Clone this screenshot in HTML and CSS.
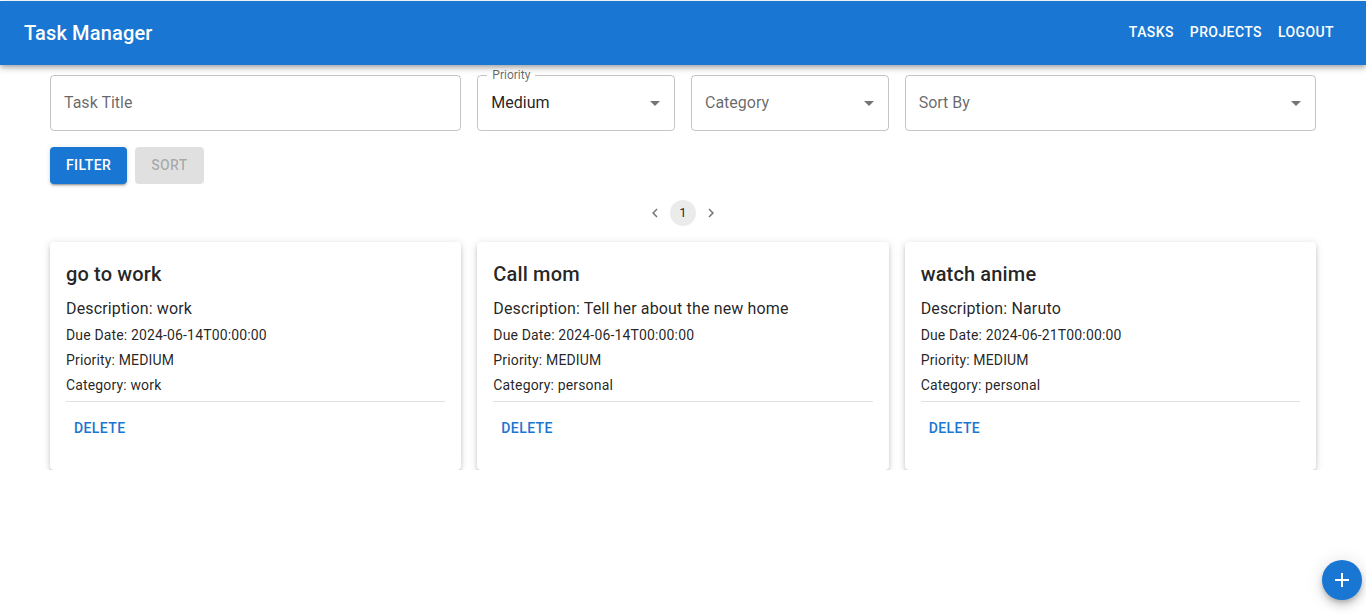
FILE: index.html
```html
<!DOCTYPE html>
<html lang="en">
<head>
<meta charset="utf-8">
<title>Task Manager</title>
<link rel="stylesheet" href="styles.css">
</head>
<body>
<header class="appbar">
  <div class="brand">Task Manager</div>
  <nav class="nav">
    <a class="nav-btn">Tasks</a>
    <a class="nav-btn">Projects</a>
    <a class="nav-btn">Logout</a>
  </nav>
</header>
<main class="main">
  <div class="filters">
    <div class="field wide"><span class="placeholder">Task Title</span></div>
    <div class="field narrow has-label">
      <span class="float-label">Priority</span>
      <span class="value">Medium</span>
      <svg class="arrow" viewBox="0 0 24 24" width="24" height="24"><path d="M7 10l5 5 5-5z"/></svg>
    </div>
    <div class="field narrow">
      <span class="placeholder">Category</span>
      <svg class="arrow" viewBox="0 0 24 24" width="24" height="24"><path d="M7 10l5 5 5-5z"/></svg>
    </div>
    <div class="field wide">
      <span class="placeholder">Sort By</span>
      <svg class="arrow" viewBox="0 0 24 24" width="24" height="24"><path d="M7 10l5 5 5-5z"/></svg>
    </div>
  </div>
  <div class="actions">
    <button class="btn btn-primary">Filter</button>
    <button class="btn btn-disabled">Sort</button>
  </div>
  <div class="pagination">
    <span class="page-item arrow-item"><svg viewBox="0 0 24 24" width="18" height="18"><path d="M15.41 7.41 14 6l-6 6 6 6 1.41-1.41L10.83 12z"/></svg></span>
    <span class="page-item current">1</span>
    <span class="page-item arrow-item"><svg viewBox="0 0 24 24" width="18" height="18"><path d="M10 6 8.59 7.41 13.17 12l-4.58 4.59L10 18l6-6z"/></svg></span>
  </div>
  <div class="cards">
    <div class="card">
      <h2 class="card-title">go to work</h2>
      <p class="card-desc">Description: work</p>
      <p class="card-line">Due Date: 2024-06-14T00:00:00</p>
      <p class="card-line">Priority: MEDIUM</p>
      <p class="card-line">Category: work</p>
      <hr class="divider">
      <div class="card-actions"><button class="text-btn">Delete</button></div>
    </div>
    <div class="card">
      <h2 class="card-title">Call mom</h2>
      <p class="card-desc">Description: Tell her about the new home</p>
      <p class="card-line">Due Date: 2024-06-14T00:00:00</p>
      <p class="card-line">Priority: MEDIUM</p>
      <p class="card-line">Category: personal</p>
      <hr class="divider">
      <div class="card-actions"><button class="text-btn">Delete</button></div>
    </div>
    <div class="card">
      <h2 class="card-title">watch anime</h2>
      <p class="card-desc">Description: Naruto</p>
      <p class="card-line">Due Date: 2024-06-21T00:00:00</p>
      <p class="card-line">Priority: MEDIUM</p>
      <p class="card-line">Category: personal</p>
      <hr class="divider">
      <div class="card-actions"><button class="text-btn">Delete</button></div>
    </div>
  </div>
</main>
<button class="fab" aria-label="add">
  <svg viewBox="0 0 24 24" width="24" height="24"><path d="M19 13h-6v6h-2v-6H5v-2h6V5h2v6h6v2z"/></svg>
</button>
</body>
</html>
```
FILE: styles.css
```css
* { box-sizing: border-box; }
html, body { margin: 0; padding: 0; }
body {
  font-family: Roboto, "Liberation Sans", Arial, sans-serif;
  color: rgba(0,0,0,0.87);
  background: #fff;
  padding-top: 1px;
}
.appbar {
  height: 64px;
  background: #1976d2;
  color: #fff;
  display: flex;
  align-items: center;
  justify-content: space-between;
  padding: 0 24px;
  box-shadow: 0 2px 4px -1px rgba(0,0,0,0.2), 0 4px 5px 0 rgba(0,0,0,0.14), 0 1px 10px 0 rgba(0,0,0,0.12);
  position: relative;
  z-index: 2;
}
.brand { font-size: 20px; font-weight: 500; letter-spacing: 0.0075em; }
.nav { display: flex; }
.nav-btn {
  font-size: 14px;
  font-weight: 500;
  text-transform: uppercase;
  letter-spacing: 0.02857em;
  padding: 5px 8px 7px;
  line-height: 24px;
  color: #fff;
}
.main { padding: 10px 50px 0; }
.filters {
  display: grid;
  grid-template-columns: calc((100% + 16px) * 4 / 12 - 16px) calc((100% + 16px) * 2 / 12 - 16px) calc((100% + 16px) * 2 / 12 - 16px) 1fr;
  column-gap: 16px;
}
.field {
  position: relative;
  height: 56px;
  border: 1px solid rgba(0,0,0,0.23);
  border-radius: 4px;
  display: flex;
  align-items: center;
  padding: 0 14px 2px 13px;
  font-size: 16px;
}
.placeholder { color: rgba(0,0,0,0.6); }
.value { color: rgba(0,0,0,0.87); }
.arrow {
  position: absolute;
  right: 7px;
  top: 15px;
  fill: rgba(0,0,0,0.54);
}
.float-label {
  position: absolute;
  top: -8px;
  left: 9px;
  padding: 0 5px;
  background: #fff;
  font-size: 12px;
  line-height: 14px;
  color: rgba(0,0,0,0.6);
}
.actions {
  display: flex;
  gap: 8px;
  margin-top: 16px;
}
.btn {
  font-family: inherit;
  font-size: 14px;
  font-weight: 500;
  text-transform: uppercase;
  letter-spacing: 0.02857em;
  height: 37px;
  padding: 0 16px 2px;
  border: 0;
  border-radius: 4px;
}
.btn-primary {
  background: #1976d2;
  color: #fff;
  box-shadow: 0 3px 1px -2px rgba(0,0,0,0.2), 0 2px 2px 0 rgba(0,0,0,0.14), 0 1px 5px 0 rgba(0,0,0,0.12);
}
.btn-disabled {
  background: rgba(0,0,0,0.12);
  color: rgba(0,0,0,0.26);
}
.pagination {
  display: flex;
  justify-content: center;
  margin-top: 16px;
}
.page-item {
  width: 26px;
  height: 26px;
  margin: 0 1px;
  border-radius: 13px;
  display: flex;
  align-items: center;
  justify-content: center;
  font-size: 13px;
  color: rgba(0,0,0,0.87);
}
.page-item svg { fill: rgba(0,0,0,0.54); }
.page-item.current { background: rgba(0,0,0,0.08); padding-bottom: 2px; }
.cards {
  display: grid;
  grid-template-columns: repeat(3, 1fr);
  gap: 16px;
  margin-top: 16px;
}
.card {
  height: 228px;
  border-radius: 4px;
  padding: 16px 16px 0;
  background: #fff;
  box-shadow: 0 3px 3px -2px rgba(0,0,0,0.2), 0 3px 4px 0 rgba(0,0,0,0.14), 0 1px 8px 0 rgba(0,0,0,0.12);
}
.card-title {
  margin: 0 0 7px;
  font-size: 20px;
  font-weight: 500;
  line-height: 32px;
  letter-spacing: 0.0075em;
}
.card-desc {
  margin: 0;
  font-size: 16px;
  line-height: 24px;
  letter-spacing: 0.00938em;
}
.card-line {
  margin: 4px 0 0;
  font-size: 14px;
  line-height: 21px;
  letter-spacing: 0.01071em;
}
.divider {
  margin: 5px 0 0;
  border: 0;
  border-top: 1px solid rgba(0,0,0,0.12);
}
.card-actions { padding: 8px 0 0; }
.text-btn {
  font-family: inherit;
  font-size: 14px;
  font-weight: 500;
  text-transform: uppercase;
  letter-spacing: 0.02857em;
  color: #1976d2;
  background: none;
  border: 0;
  height: 37px;
  padding: 0 8px 2px;
}
.fab {
  position: fixed;
  right: 4px;
  bottom: 14px;
  width: 40px;
  height: 40px;
  border-radius: 50%;
  border: 0;
  background: #1976d2;
  display: flex;
  align-items: center;
  justify-content: center;
  box-shadow: 0 3px 5px -1px rgba(0,0,0,0.2), 0 6px 10px 0 rgba(0,0,0,0.14), 0 1px 18px 0 rgba(0,0,0,0.12);
}
.fab svg { fill: #fff; }
```
